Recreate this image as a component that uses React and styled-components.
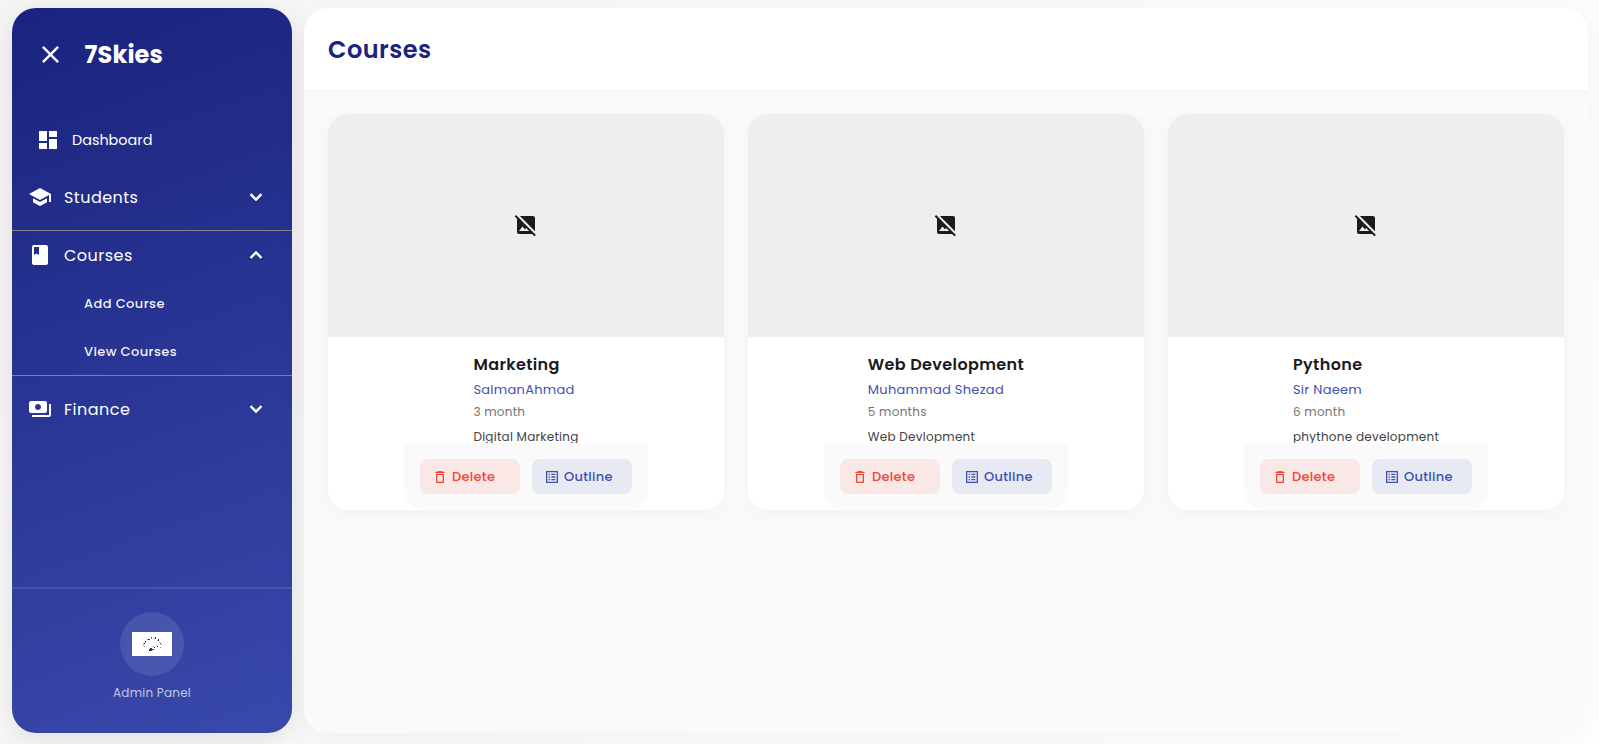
import React from "react";
import styled, { createGlobalStyle } from "styled-components";
import {
  MdBook,
  MdClose,
  MdDashboard,
  MdDeleteOutline,
  MdExpandLess,
  MdExpandMore,
  MdImageNotSupported,
  MdListAlt,
  MdPayments,
  MdSchool,
} from "react-icons/md";

const GlobalStyle = createGlobalStyle`
  *, *::before, *::after { box-sizing: border-box; }
  body {
    margin: 0;
    font-family: Poppins, Inter, "Liberation Sans", sans-serif;
    overflow: hidden;
  }
  button { font: inherit; border: 0; cursor: pointer; }
  svg { flex: none; display: block; }
`;

const Page = styled.div`
  display: flex;
  gap: 12px;
  height: 744px;
  padding: 8px 11px 11px 12px;
  background: linear-gradient(135deg, #f5f5f5 0%, #ffffff 100%);
`;

const Sidebar = styled.aside`
  display: flex;
  flex-direction: column;
  flex: none;
  width: 280px;
  border-radius: 24px;
  overflow: hidden;
  color: #fff;
  background: linear-gradient(160deg, #1a237e 0%, #3949ab 100%);
  box-shadow: 0 8px 32px rgba(0, 0, 0, 0.1);
`;

const Brand = styled.div`
  display: flex;
  align-items: center;
  height: 92px;
  padding-left: 23.5px;
  gap: 20px;
`;

const CloseButton = styled.button`
  padding: 0;
  background: none;
  color: inherit;
  font-size: 29px;
  line-height: 1;
`;

const BrandName = styled.span`
  font-size: 24px;
  font-weight: 700;
  letter-spacing: 0.15px;
`;

const Nav = styled.nav`
  display: flex;
  flex-direction: column;
  flex: 1;
  padding-top: 16px;
`;

const DashboardLink = styled.a`
  display: flex;
  align-items: center;
  gap: 12px;
  height: 48px;
  padding-left: 24px;
  font-size: 14.4px;
  svg { font-size: 24px; }
`;

const Group = styled.section`
  padding: ${(p) => (p.$open ? "0" : "9px 0")};
  border: solid #857f88;
  border-width: ${(p) => (p.$open ? "1px 0" : "0")};
`;

const GroupHeader = styled.div`
  display: flex;
  align-items: center;
  height: 48px;
  padding: 0 24px 0 16px;
  font-size: 16px;
  letter-spacing: 0.48px;
  svg { font-size: 24px; }
  svg:last-child path:last-child {
    stroke: currentColor;
    stroke-width: 0.6px;
    stroke-linejoin: round;
  }
`;

const GroupLabel = styled.span`
  flex: 1;
  padding-left: 12px;
`;

const SubLink = styled.a`
  display: flex;
  align-items: center;
  height: 48px;
  padding: 2px 0 0 72px;
  font-size: 13px;
  font-weight: 500;
  letter-spacing: 0.4px;
  color: rgba(255, 255, 255, 0.95);
`;

const Profile = styled.footer`
  display: flex;
  flex-direction: column;
  align-items: center;
  height: 146px;
  padding-top: 23px;
  border-top: 2px solid rgba(255, 255, 255, 0.1);
`;

const Avatar = styled.div`
  display: grid;
  place-items: center;
  width: 64px;
  height: 64px;
  border-radius: 50%;
  background: rgba(255, 255, 255, 0.1);
`;

const Role = styled.span`
  margin-top: 7px;
  line-height: 20px;
  font-size: 12px;
  letter-spacing: 0.23px;
  color: rgba(255, 255, 255, 0.7);
`;

const Main = styled.main`
  flex: 1;
  border-radius: 24px;
  overflow: hidden;
  background: #fafafa;
  box-shadow: 0 8px 32px rgba(0, 0, 0, 0.04);
`;

const Header = styled.header`
  display: flex;
  align-items: center;
  height: 82px;
  padding: 0 24px;
  background: #fff;
  box-shadow: 0 2px 12px rgba(0, 0, 0, 0.04);
`;

const PageTitle = styled.h1`
  margin: 0;
  font-size: 24px;
  font-weight: 600;
  letter-spacing: 0.48px;
  color: #1a237e;
`;

const Grid = styled.div`
  display: grid;
  grid-template-columns: repeat(3, 396px);
  gap: 24px;
  padding: 24px;
`;

const Card = styled.article`
  display: flex;
  flex-direction: column;
  align-items: center;
  height: 396px;
  border-radius: 20px;
  overflow: hidden;
  background: #fff;
  box-shadow: 0 4px 20px rgba(0, 0, 0, 0.04);
`;

const Cover = styled.div`
  display: grid;
  place-items: center;
  align-self: stretch;
  flex: none;
  height: 222.5px;
  padding-bottom: 1px;
  background: #eee;
  color: #1b1b1d;
  font-size: 24px;
`;

const Details = styled.div`
  flex: none;
  height: 106.5px;
  padding-top: 16.5px;
  overflow: hidden;
  white-space: nowrap;
`;

const Line = styled.p`
  margin: 0;
  font-size: 12px;
  line-height: 20px;
  letter-spacing: 0.26px;
`;

const CourseName = styled(Line)`
  margin-bottom: 3px;
  font-size: 16px;
  font-weight: 600;
  line-height: 24px;
  letter-spacing: 0.38px;
  color: #1b1b1d;
`;

const Teacher = styled(Line)`
  margin-bottom: 2px;
  font-size: 13px;
  letter-spacing: 0.28px;
  color: #3f51b5;
`;

const Duration = styled(Line)`
  margin-bottom: 5px;
  color: #757575;
`;

const Description = styled(Line)`
  color: #424242;
`;

const Actions = styled.div`
  display: flex;
  gap: 12px;
  padding: 16px;
  border-radius: 0 0 20px 20px;
  background: #fafafa;
`;

const ActionButton = styled.button`
  display: flex;
  align-items: center;
  gap: 4px;
  width: 100px;
  height: 35px;
  padding: 0 12px;
  border-radius: 8px;
  font-size: 13px;
  font-weight: 500;
  letter-spacing: 0.28px;
  color: ${(p) => (p.$danger ? "#f44336" : "#3f51b5")};
  background: ${(p) => (p.$danger ? "#fae8e7" : "#e7e9f3")};
  svg { font-size: 16px; }
`;

const courses = [
  { name: "Marketing", teacher: "SalmanAhmad", duration: "3 month", about: "Digital Marketing" },
  { name: "Web Development", teacher: "Muhammad Shezad", duration: "5 months", about: "Web Devlopment" },
  { name: "Pythone", teacher: "Sir Naeem", duration: "6 month", about: "phythone development" },
];

function Logo() {
  return (
    <svg width="40" height="24" viewBox="0 0 40 24" shapeRendering="crispEdges">
      <path fill="#fff" d="M0 0h40v24H0z" />
      <path
        fill="#27306f"
        d="M19 5h1v1h-1zM23 5h1v2h-1zM16 7h2v1h-2zM26 7h1v2h-1zM13 9h1v1h-1zM12 11h1v1h-1zM28 11h1v1h-1zM25 14h1v1h-1zM18 16h2v1h2v1h-2v1h-3v-2h1zM22 15h1v1h-1z"
      />
      <path
        fill="#8d94ba"
        d="M15 7h1v1h-1zM22 6h1v1h-1zM25 8h1v1h-1zM13 10h1v1h-1zM11 11h1v1h-1zM11 13h1v1h-1zM27 10h1v1h-1zM29 12h1v1h-1zM28 15h1v1h-1zM19 6h1v1h-1zM12 14h1v1h-1z"
      />
      <path fill="#cfdcea" d="M17 11h1v1h-1zM21 14h2v1h-2zM20 14h1v1h-1zM24 13h1v1h-1z" />
    </svg>
  );
}

function NavGroup({ icon: Icon, label, links }) {
  const Chevron = links ? MdExpandLess : MdExpandMore;
  return (
    <Group $open={Boolean(links)}>
      <GroupHeader>
        <Icon />
        <GroupLabel>{label}</GroupLabel>
        <Chevron />
      </GroupHeader>
      {links?.map((link) => <SubLink key={link}>{link}</SubLink>)}
    </Group>
  );
}

function CourseCard({ course }) {
  return (
    <Card>
      <Cover>
        <MdImageNotSupported />
      </Cover>
      <Details>
        <CourseName as="h2">{course.name}</CourseName>
        <Teacher>{course.teacher}</Teacher>
        <Duration>{course.duration}</Duration>
        <Description>{course.about}</Description>
      </Details>
      <Actions>
        <ActionButton $danger>
          <MdDeleteOutline />
          Delete
        </ActionButton>
        <ActionButton>
          <MdListAlt />
          Outline
        </ActionButton>
      </Actions>
    </Card>
  );
}

export default function App() {
  return (
    <>
      <GlobalStyle />
      <Page>
        <Sidebar>
          <Brand>
            <CloseButton aria-label="Close menu">
              <MdClose />
            </CloseButton>
            <BrandName>7Skies</BrandName>
          </Brand>
          <Nav>
            <DashboardLink>
              <MdDashboard />
              Dashboard
            </DashboardLink>
            <NavGroup icon={MdSchool} label="Students" />
            <NavGroup icon={MdBook} label="Courses" links={["Add Course", "View Courses"]} />
            <NavGroup icon={MdPayments} label="Finance" />
          </Nav>
          <Profile>
            <Avatar>
              <Logo />
            </Avatar>
            <Role>Admin Panel</Role>
          </Profile>
        </Sidebar>
        <Main>
          <Header>
            <PageTitle>Courses</PageTitle>
          </Header>
          <Grid>
            {courses.map((course) => (
              <CourseCard key={course.name} course={course} />
            ))}
          </Grid>
        </Main>
      </Page>
    </>
  );
}
